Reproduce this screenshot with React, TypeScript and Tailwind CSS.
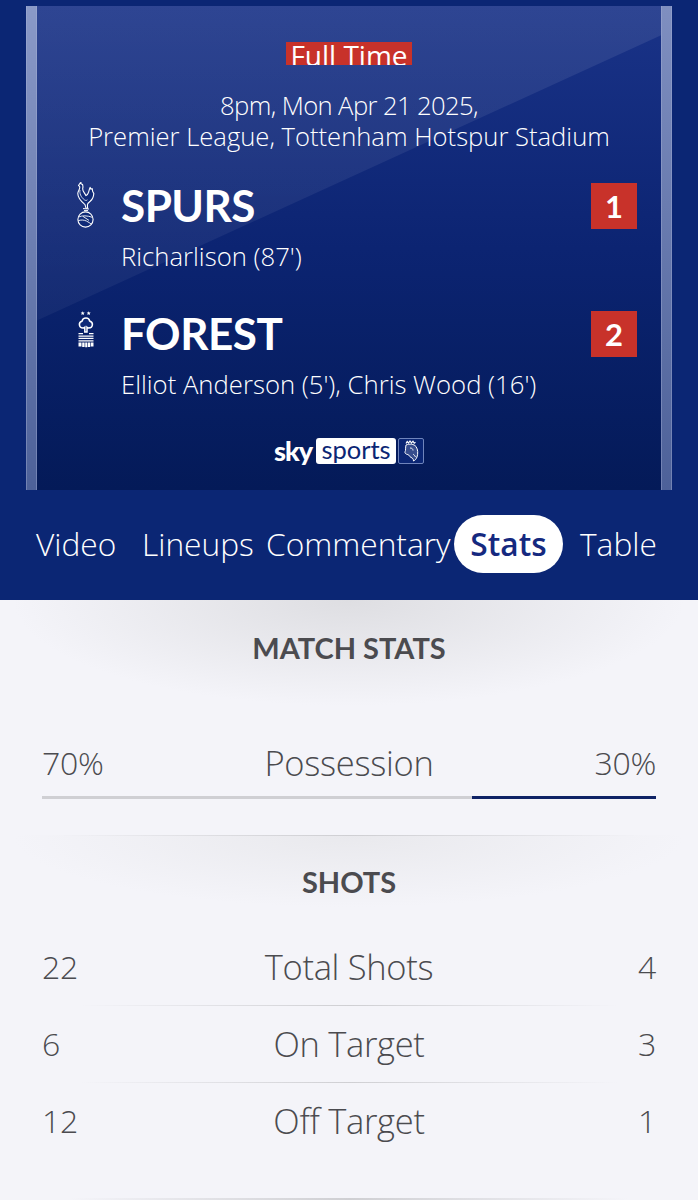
function SpursBadge() {
  return (
    <svg width="18" height="46" viewBox="0 0 18 46" fill="none" stroke="#fff" strokeWidth="1.1" strokeLinejoin="round">
      <path d="M1.5 3.5L3 1.2 4 .4 3.8 1.8 5.6 2.6 6 5c-.6 1.6-.4 3.4 1 5.4l2 3.2c1-.6 2-1.8 2.6-3.4.4-1.6 1-4 1.6-4.8l.6 1.8 1.4-.6.4 2.6 1.2 2.4c-.2 3-1.4 5.8-3.6 7.6-1.6 1.2-2.6 2-2.8 3.6l.2 3.4H9l-1-3.6C4 19.4.8 16 .8 11.6.8 8.6 3.6 7 2.6 4.4z" fill="#0f2a78" />
      <path d="M3 8c-.6 3 .6 7 4.6 10 1 .6 2 .6 2.8-.2" fill="#0f2a78" strokeWidth=".8" />
      <path d="M6 26.6l6 .4M7 28.6h4" strokeWidth="1" />
      <circle cx="8.5" cy="37.5" r="7.6" fill="#0f2a78" />
      <path d="M1.6 35c3.6-1.6 8.6-1.6 14 .4M1.4 38.6c3.6-1 5.4-.6 8 .4 2 .8 3.6 2.4 5 3.2M6 34.4l6 4" strokeWidth=".9" />
    </svg>
  );
}

function ForestBadge() {
  return (
    <svg width="16" height="38" viewBox="0 0 16 38" fill="#fff">
      <path d="M4.700 1.200l.6 1.300 1.400.1-1 1 .3 1.400-1.300-.7-1.300.7.3-1.400-1-1 1.400-.1zM10.700 1.200l.6 1.300 1.400.1-1 1 .3 1.400-1.300-.7-1.300.7.3-1.400-1-1 1.400-.1z" />
      <path d="M8 8c2.200 0 3.400 1.400 3.600 3 2 .6 3 2.200 2.800 4-.2 1.800-1.800 3-3.600 3-.8 0-1.400-.2-1.800-.6v4.600H6.800v-4.600c-.4.4-1 .6-1.800.6-1.800 0-3.400-1.200-3.600-3-.2-1.800.8-3.400 2.800-4 .2-1.600 1.400-3 3.800-3z" fill="#0f2a78" stroke="#fff" strokeWidth="1.5" />
      <path d="M.5 23H5v1.300H.5zM11 23h4.500v1.300H11zM.5 25.400h15v1.300H.5zM.5 27.800h15v1.300H.5zM.5 30.200h15v1.300H.5z" />
      <path d="M.5 32.600h3v4H.5zM4.200 32.600h2.400v4.400H4.200zM7.200 32.600h2v4.600h-2zM9.800 32.600h2.400v4.400H9.800zM12.800 32.600h2.700v4h-2.700z" />
    </svg>
  );
}

function PremierLion() {
  return (
    <svg width="26" height="26" viewBox="0 0 26 26" fill="none" stroke="#fff" strokeWidth="1">
      <rect x="0.5" y="0.5" width="25" height="25" rx="1.5" stroke="#6f84bb" fill="#0b2674" />
      <path d="M8 5.500l1.200-2 1.300 1.500 1.500-2 1.500 2 1.500-1.800 1.200 2 1.300-1" strokeWidth="1.2" />
      <path d="M8 7c3.500-1.500 8-1 10 1.500 2 3 2.200 7 1 10.500-.8 2-2 3.500-3.500 4 0-2-1-3-2.600-3.600-1.400-.6-1.400-2.400-3-2.800-2.200-.4-3.400-1.600-2.800-3 .8-1.200.2-4 .9-6.600z" fill="#fff" fillOpacity="0.18" />
      <path d="M12 10c2 0 3 1 3 2.500M15 16c1 1 2 1.500 2.500 3" strokeWidth=".9" />
    </svg>
  );
}

function TeamRow({ badge, name, scorers, score }: { badge: React.ReactNode; name: string; scorers: string; score: string }) {
  return (
    <div className="flex items-start">
      <div className="w-[48px] flex justify-center">{badge}</div>
      <div className="flex-1 ml-[11px]">
        <div className="font-['Lato'] text-[44px] leading-[46px] font-bold tracking-[-0.5px] text-white">{name}</div>
        <div className="mt-[13px] text-[25.7px] leading-[32px] text-white">{scorers}</div>
      </div>
      <div className="w-[46px] h-[46px] mt-[1px] bg-[#c8322a] flex items-center justify-center font-['Lato'] text-[31px] font-bold text-white">{score}</div>
    </div>
  );
}

function StatRow({ left, label, right, line = true }: { left: string; label: string; right: string; line?: boolean }) {
  return (
    <div className="relative h-[77px] flex items-center justify-between px-[42px] pb-[2px] text-[#4b4b4f] text-[32px] tracking-[-0.3px]">
      <span>{left}</span>
      <span className="absolute inset-x-0 text-center text-[34.5px]">{label}</span>
      <span>{right}</span>
      {line && <div className="absolute bottom-0 left-[80px] right-[80px] h-[1px] bg-gradient-to-r from-transparent via-[#cfcfd3] to-transparent" />}
    </div>
  );
}

export default function App() {
  return (
    <div className="w-[698px] h-[1200px] overflow-hidden bg-[#f4f4f9] font-['Open_Sans','Liberation_Sans',sans-serif] font-light">
      {/* Match header */}
      <div className="h-[600px] bg-[#0b2674] pt-[6px] px-[26px]">
        <div className="relative h-[484px] px-[11px] bg-gradient-to-b from-[#1a3388] via-[#0c2472] to-[#041a58] overflow-hidden">
          {/* Glass sheen */}
          <div className="absolute inset-0 bg-gradient-to-b from-white/[0.09] to-white/[0.02] [clip-path:polygon(0_0,100%_0,100%_5%,0_66%)]" />
          <div className="absolute left-0 inset-y-0 w-[11px] bg-gradient-to-b from-[#8b9ac8] to-[#4d6199] border-x border-[#a9b5d9]/40" />
          <div className="absolute right-0 inset-y-0 w-[11px] bg-gradient-to-b from-[#7f8fc0] to-[#4d6199] border-x border-[#a9b5d9]/40" />

          <div className="relative flex flex-col h-full">
            <div className="flex justify-center pt-[36px]">
              <div className="h-[23px] w-[126px] bg-[#c8322a] overflow-hidden text-center text-white text-[28px] font-medium leading-[27px]">Full Time</div>
            </div>
            <div className="mt-[25px] text-center text-white text-[25.6px] leading-[31px]">
              <div className="tracking-[-0.6px]">8pm, Mon Apr 21 2025,</div>
              <div>Premier League, Tottenham Hotspur Stadium</div>
            </div>
            <div className="mt-[30px] pl-[25px] pr-[24px] flex flex-col gap-[37px]">
              <TeamRow badge={<SpursBadge />} name="SPURS" scorers="Richarlison (87')" score="1" />
              <TeamRow badge={<ForestBadge />} name="FOREST" scorers="Elliot Anderson (5'), Chris Wood (16')" score="2" />
            </div>
            <div className="mt-[37px] flex items-center justify-center">
              <span className="font-['Lato'] text-white text-[27px] font-black tracking-[-1px] leading-[26px]">sky</span>
              <span className="ml-[4px] h-[26px] w-[80px] bg-white rounded-[3px] font-['Lato'] font-normal text-[#0b2674] text-[25.5px] leading-[23px] text-center">sports</span>
              <span className="ml-[2px] flex"><PremierLion /></span>
            </div>
          </div>
        </div>

        {/* Tabs */}
        <div className="mt-[25px] -mx-[26px] relative h-[58px] text-white text-[31.7px]">
          <div className="flex items-center h-full">
            <span className="ml-[36px] w-[106px]">Video</span>
            <span className="w-[124px]">Lineups</span>
            <span className="w-[188px]">Commentary</span>
            <span className="w-[109px] h-[58px] rounded-full bg-white text-[#15297f] font-semibold flex items-center justify-center">Stats</span>
            <span className="ml-[17px]">Table</span>
          </div>
        </div>
      </div>

      {/* Stats */}
      <div className="relative h-[235px]">
        <div className="absolute inset-x-0 top-0 h-[110px] bg-[radial-gradient(ellipse_at_top,#dedee2_0%,#f4f4f9_68%)]" />
        <h2 className="relative pt-[30px] text-center font-['Lato'] text-[#4b4b4f] text-[29px] leading-[36px] font-bold">MATCH STATS</h2>
        <div className="relative mt-[77px] px-[42px] flex items-center justify-between text-[#4b4b4f] text-[32px] tracking-[-0.3px] leading-[40px]">
          <span>70%</span>
          <span className="text-[34.5px]">Possession</span>
          <span>30%</span>
        </div>
        <div className="relative mt-[13px] mx-[42px] flex h-[3px]">
          <div className="w-[430px] bg-[#cfcfd3]" />
          <div className="flex-1 bg-[#0f2366]" />
        </div>
      </div>

      <div className="relative">
        <div className="absolute inset-x-0 top-0 h-[75px] bg-[radial-gradient(ellipse_at_top,#e9e9ed_0%,#f4f4f9_68%)]" />
        <div className="absolute top-0 left-[60px] right-[60px] h-[1px] bg-gradient-to-r from-transparent via-[#cfcfd3] to-transparent" />
        <h2 className="relative pt-[29px] text-center font-['Lato'] text-[#4b4b4f] text-[29px] leading-[36px] font-bold">SHOTS</h2>
        <div className="relative mt-[29px]">
          <StatRow left="22" label="Total Shots" right="4" />
          <StatRow left="6" label="On Target" right="3" />
          <StatRow left="12" label="Off Target" right="1" line={false} />
        </div>
        <div className="mt-[38px] mx-[70px] h-[2px] bg-gradient-to-r from-transparent via-[#cfcfd3] to-transparent" />
      </div>
    </div>
  );
}
